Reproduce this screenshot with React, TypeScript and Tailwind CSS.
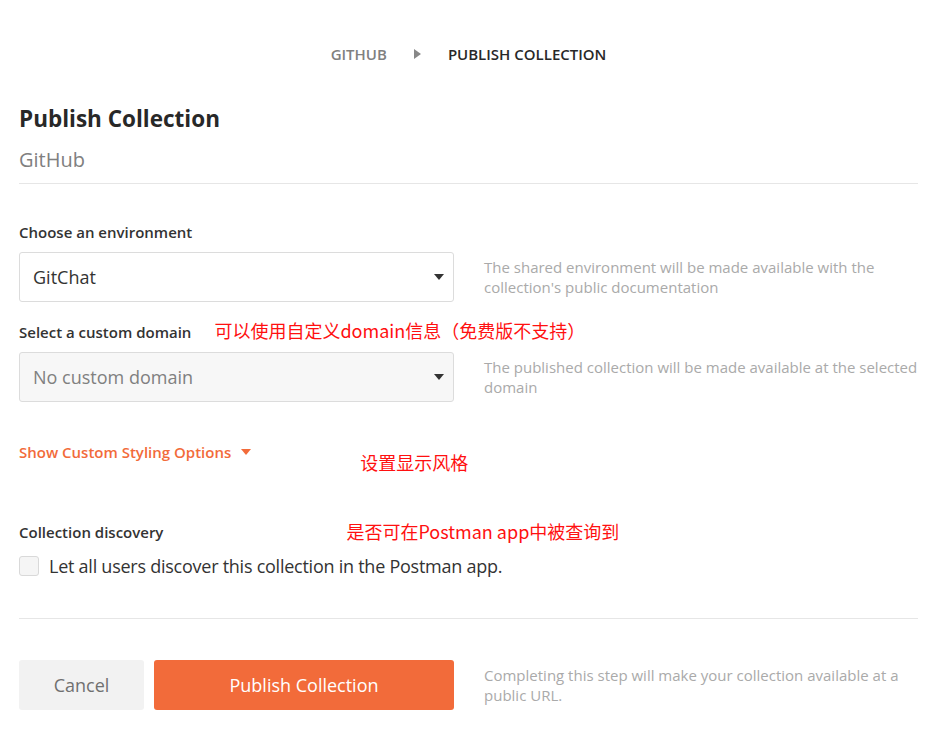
import { ChangeEvent, useState } from "react";

const helpText =
  "text-[15px] leading-[20px] text-[#aaaaaa] font-['Open_Sans',sans-serif]";
const annotation =
  "text-[18px] leading-[24px] text-[#ff1010] font-['Microsoft_YaHei','Noto_Sans_CJK_SC',sans-serif] whitespace-nowrap";
const label = "text-[15px] leading-[20px] font-semibold text-[#333]";

const Caret = ({ color = "#333" }: { color?: string }) => (
  <svg width="10" height="6" viewBox="0 0 10 6">
    <path d="M0 0 L10 0 L5 6 Z" fill={color} />
  </svg>
);

const App = () => {
  const [discover, setDiscover] = useState<boolean>(false);

  // handle checkbox
  const handleDiscover = (e: ChangeEvent<HTMLInputElement>) => {
    setDiscover(e.target.checked);
  };

  return (
    <main className="w-[944px] h-[752px] bg-white font-['Open_Sans',sans-serif] pl-[19px] pr-[26px]">
      {/* breadcrumb */}
      <nav className="flex items-center justify-center pt-[44px] h-[64px] text-[15px] font-semibold">
        <span className="text-[#808080]">GITHUB</span>
        <span className="mx-[27px] flex">
          <svg width="7" height="10" viewBox="0 0 7 10">
            <path d="M0 0 L7 5 L0 10 Z" fill="#888" />
          </svg>
        </span>
        <span className="text-[#282828]">PUBLISH COLLECTION</span>
      </nav>

      <section className="pt-[40px]">
        <h1 className="text-[22.5px] leading-[30px] font-bold text-[#282828]">
          Publish Collection
        </h1>
        <h2 className="text-[20px] leading-[26px] text-[#808080] mt-[13px]">
          GitHub
        </h2>
        <div className="border-b border-[#e6e6e6] mt-[10px]" />
      </section>

      <section className="pt-[38px]">
        <label className={`block ${label}`}>Choose an environment</label>
        <div className="flex items-start gap-[30px] mt-[10px]">
          <div className="w-[435px] h-[50px] shrink-0 border border-[#dcdcdc] rounded-[3px] flex items-center justify-between pl-[13px] pr-[9px] text-[18px] text-[#333]">
            <span>GitChat</span>
            <Caret />
          </div>
          <p className={`${helpText} pt-[5px]`}>
            The shared environment will be made available with the collection's public documentation
          </p>
        </div>

        <div className="flex items-center h-[20px] mt-[20px]">
          <label className={label}>Select a custom domain</label>
          <span className={`${annotation} ml-[23px] mb-[4px]`}>
            可以使用自定义domain信息（免费版不支持）
          </span>
        </div>
        <div className="flex items-start gap-[30px] mt-[10px]">
          <div className="w-[435px] h-[50px] shrink-0 border border-[#dcdcdc] bg-[#f7f7f7] rounded-[3px] flex items-center justify-between pl-[13px] pr-[9px] text-[18px] text-[#808080]">
            <span>No custom domain</span>
            <Caret />
          </div>
          <p className={`${helpText} pt-[5px]`}>
            The published collection will be made available at the selected domain
          </p>
        </div>

        <div className="flex items-start mt-[40px]">
          <button className="flex items-center gap-[10px] text-[15px] leading-[20px] font-semibold text-[#f26b3a]">
            Show Custom Styling Options
            <Caret color="#f26b3a" />
          </button>
          <span className={`${annotation} ml-[109px] mt-[8px]`}>设置显示风格</span>
        </div>

        <div className="flex items-center h-[20px] mt-[48px]">
          <label className={label}>Collection discovery</label>
          <span className={`${annotation} ml-[183px] mb-[2px]`}>
            是否可在Postman app中被查询到
          </span>
        </div>
        <label className="flex items-center gap-[10px] mt-[12px] text-[18px] leading-[24px] text-[#333] cursor-pointer">
          <input
            type="checkbox"
            checked={discover}
            onChange={handleDiscover}
            className="appearance-none w-[20px] h-[20px] rounded-[3px] border border-[#d9d9d9] bg-[#f5f5f5]"
          />
          <span className="tracking-[-0.25px] whitespace-nowrap">
            Let all users discover this collection in the Postman app.
          </span>
        </label>
        <div className="border-b border-[#e6e6e6] mt-[40px]" />
      </section>

      <section className="flex items-start mt-[41px]">
        <button className="w-[125px] h-[50px] rounded-[3px] bg-[#f2f2f2] text-[18px] text-[#707070]">
          Cancel
        </button>
        <button className="w-[300px] h-[50px] ml-[10px] rounded-[3px] bg-[#f26b3a] text-[18px] text-white">
          Publish Collection
        </button>
        <p className={`${helpText} ml-[30px] pt-[5px] flex-1`}>
          Completing this step will make your collection available at a public URL.
        </p>
      </section>
    </main>
  );
};

export default App;
